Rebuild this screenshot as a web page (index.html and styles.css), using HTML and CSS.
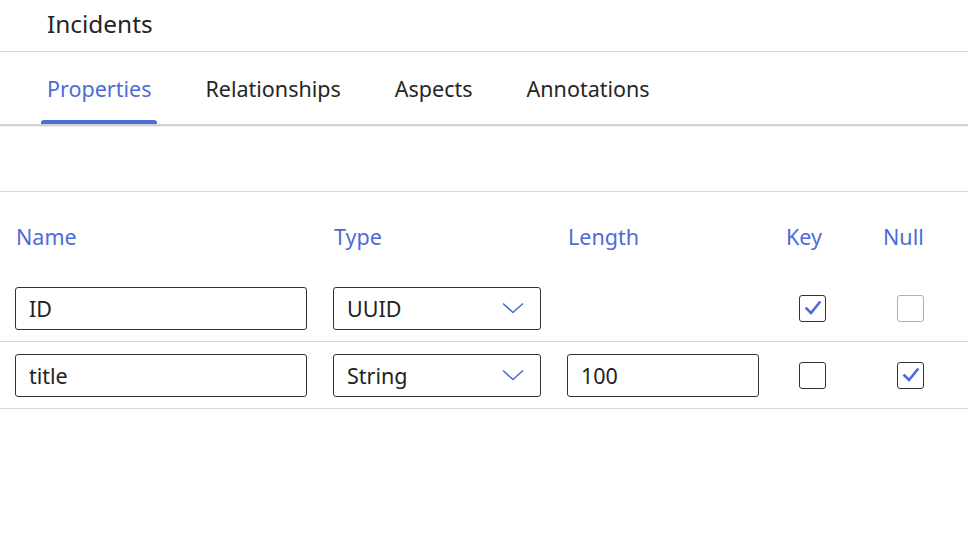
FILE: index.html
```html
<!DOCTYPE html>
<html>
<head>
<meta charset="utf-8">
<link rel="stylesheet" href="styles.css">
</head>
<body>
<header class="title-bar"><h1 class="title">Incidents</h1></header>
<nav class="tabs">
  <div class="tab active">Properties</div>
  <div class="tab">Relationships</div>
  <div class="tab">Aspects</div>
  <div class="tab">Annotations</div>
</nav>
<div class="spacer"></div>
<div class="table">
  <div class="row head">
    <div class="th">Name</div>
    <div class="th">Type</div>
    <div class="th">Length</div>
    <div class="th">Key</div>
    <div class="th">Null</div>
  </div>
  <div class="row">
    <div class="input">ID</div>
    <div class="input select">UUID<svg class="chev" width="22" height="12" viewBox="0 0 22 12"><path d="M1 1.5 L11 10.5 L21 1.5" fill="none" stroke="#4f6bd8" stroke-width="1.6"/></svg></div>
    <div></div>
    <div class="cell-cb"><span class="cb"><svg width="24" height="24" viewBox="0 0 24 24"><path d="M5.5 12.5 L10 17 L18.5 6.5" fill="none" stroke="#4f6bd8" stroke-width="2.6" stroke-linecap="square"/></svg></span></div>
    <div class="cell-cb null"><span class="cb disabled"></span></div>
  </div>
  <div class="row">
    <div class="input">title</div>
    <div class="input select">String<svg class="chev" width="22" height="12" viewBox="0 0 22 12"><path d="M1 1.5 L11 10.5 L21 1.5" fill="none" stroke="#4f6bd8" stroke-width="1.6"/></svg></div>
    <div class="input">100</div>
    <div class="cell-cb"><span class="cb"></span></div>
    <div class="cell-cb null"><span class="cb"><svg width="24" height="24" viewBox="0 0 24 24"><path d="M5.5 12.5 L10 17 L18.5 6.5" fill="none" stroke="#4f6bd8" stroke-width="2.6" stroke-linecap="square"/></svg></span></div>
  </div>
</div>
</body>
</html>
```
FILE: styles.css
```css
html, body {
  margin: 0;
  padding: 0;
  background: #fff;
  font-family: "Noto Sans", "Open Sans", sans-serif;
  color: #222;
}
.title-bar {
  height: 52px;
  box-sizing: border-box;
  border-bottom: 1px solid #d6d6d6;
  display: flex;
  align-items: center;
  padding-left: 47px;
  padding-bottom: 4px;
}
.title {
  margin: 0;
  font-size: 24.4px;
  font-weight: 400;
  color: #252525;
}
.tabs {
  height: 72px;
  display: flex;
  gap: 42px;
  padding-left: 41px;
  border-bottom: 2px solid #d2d2d2;
  box-shadow: 0 1px 1px rgba(0,0,0,0.06);
}
.tab {
  position: relative;
  padding: 0 6px;
  display: flex;
  align-items: center;
  font-size: 21.5px;
  color: #262626;
}
.tab.active {
  color: #4f6bd8;
}
.tab.active::after {
  content: "";
  position: absolute;
  left: 0;
  right: 0;
  bottom: 0;
  height: 4px;
  border-radius: 3px 3px 0 0;
  background: #4a6fd6;
}
.spacer {
  height: 65px;
  border-bottom: 1px solid #d6d6d6;
}
.row {
  display: grid;
  grid-template-columns: 292px 208px 192px 71px 71px;
  column-gap: 26px;
  padding-left: 15px;
  align-items: center;
  height: 66px;
  border-bottom: 1px solid #d6d6d6;
}
.row.head {
  height: 83px;
  box-sizing: border-box;
  border-bottom: none;
  padding-top: 6px;
}
.th {
  font-size: 21.5px;
  color: #4f6bd8;
  padding-left: 1px;
}
.input {
  height: 43px;
  box-sizing: border-box;
  border: 1px solid #333;
  border-radius: 3px;
  padding: 0 13px;
  display: flex;
  align-items: center;
  font-size: 21.5px;
  color: #222;
}
.select {
  justify-content: space-between;
  padding-right: 16px;
}
.chev {
  display: block;
}
.cell-cb {
  padding-left: 14px;
  display: flex;
}
.cell-cb.null {
  padding-left: 15px;
}
.cb {
  width: 27px;
  height: 27px;
  box-sizing: border-box;
  border: 1.5px solid #333;
  border-radius: 3px;
  display: flex;
  align-items: center;
  justify-content: center;
}
.cb.disabled {
  border-color: #b0b0b0;
}
```
